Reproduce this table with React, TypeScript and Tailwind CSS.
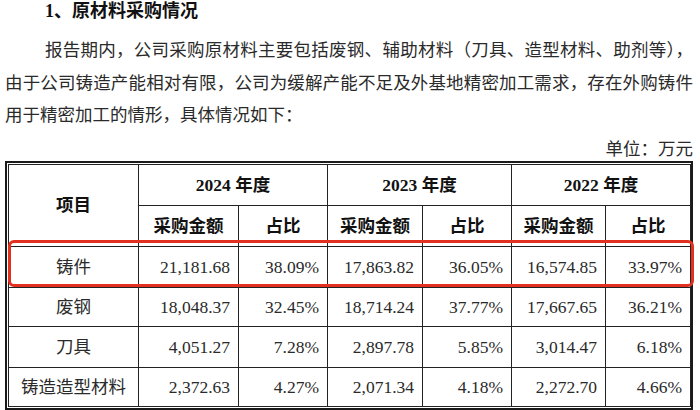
import React from "react";

const F = { fontFamily: '"Liberation Serif", "Noto Sans CJK SC", serif' };

const rows = [
  ["铸件", "21,181.68", "38.09%", "17,863.82", "36.05%", "16,574.85", "33.97%"],
  ["废钢", "18,048.37", "32.45%", "18,714.24", "37.77%", "17,667.65", "36.21%"],
  ["刀具", "4,051.27", "7.28%", "2,897.78", "5.85%", "3,014.47", "6.18%"],
  ["铸造造型材料", "2,372.63", "4.27%", "2,071.34", "4.18%", "2,272.70", "4.66%"],
];
const heights = ["h-[41px]", "h-[39px]", "h-[41px]", "h-[39px]"];

export default function App() {
  return (
    <div className="w-[700px] h-[410px] bg-white overflow-hidden text-[#2a2a2a]" style={F}>
      <div className="ml-[5px] w-[688px]">
        <div className="h-[34px] leading-[22px] pl-[40px] text-[18px] font-bold text-[#111]">1、原材料采购情况</div>
        <div className="text-[17.5px] leading-[32.5px]">
          <div className="pl-[40px] whitespace-nowrap text-justify [text-align-last:justify]">
            报告期内，公司采购原材料主要包括废钢、辅助材料（刀具、造型材料、助剂等），
          </div>
          <div className="whitespace-nowrap text-justify [text-align-last:justify]">
            由于公司铸造产能相对有限，公司为缓解产能不足及外基地精密加工需求，存在外购铸件
          </div>
          <div className="whitespace-nowrap">用于精密加工的情形，具体情况如下：</div>
        </div>
        <div className="h-[29.5px] pt-[6.5px] leading-[23px] text-right text-[17.5px]">单位：万元</div>
        <div className="relative w-[688px] border-2 border-[#1a1a1a] p-px">
          <table className="table-fixed border-collapse w-[682px] text-[17.5px]">
            <colgroup>
              <col className="w-[130px]" />
              <col className="w-[100px]" />
              <col className="w-[89px]" />
              <col className="w-[95px]" />
              <col className="w-[89px]" />
              <col className="w-[94px]" />
              <col className="w-[85px]" />
            </colgroup>
            <tbody>
              <tr className="h-[41px] font-bold text-[#111]">
                <td rowSpan={2} className="border border-[#222] text-center">项目</td>
                <td colSpan={2} className="border border-[#222] text-center">2024 年度</td>
                <td colSpan={2} className="border border-[#222] text-center">2023 年度</td>
                <td colSpan={2} className="border border-[#222] text-center">2022 年度</td>
              </tr>
              <tr className="h-[41px] font-bold text-[#111]">
                <td className="border border-[#222] text-center">采购金额</td>
                <td className="border border-[#222] text-center">占比</td>
                <td className="border border-[#222] text-center">采购金额</td>
                <td className="border border-[#222] text-center">占比</td>
                <td className="border border-[#222] text-center">采购金额</td>
                <td className="border border-[#222] text-center">占比</td>
              </tr>
              {rows.map((r, i) => (
                <tr key={i} className={heights[i]}>
                  {r.map((c, j) => (
                    <td
                      key={j}
                      className={
                        j === 0
                          ? "border border-[#222] text-center whitespace-nowrap"
                          : "border border-[#222] text-right pr-[8px] whitespace-nowrap"
                      }
                    >
                      {c}
                    </td>
                  ))}
                </tr>
              ))}
            </tbody>
          </table>
          <div className="absolute left-[1px] top-[77px] w-[686px] h-[47px] border-[3px] border-[#e2321f] rounded-[6px]" />
        </div>
      </div>
    </div>
  );
}
